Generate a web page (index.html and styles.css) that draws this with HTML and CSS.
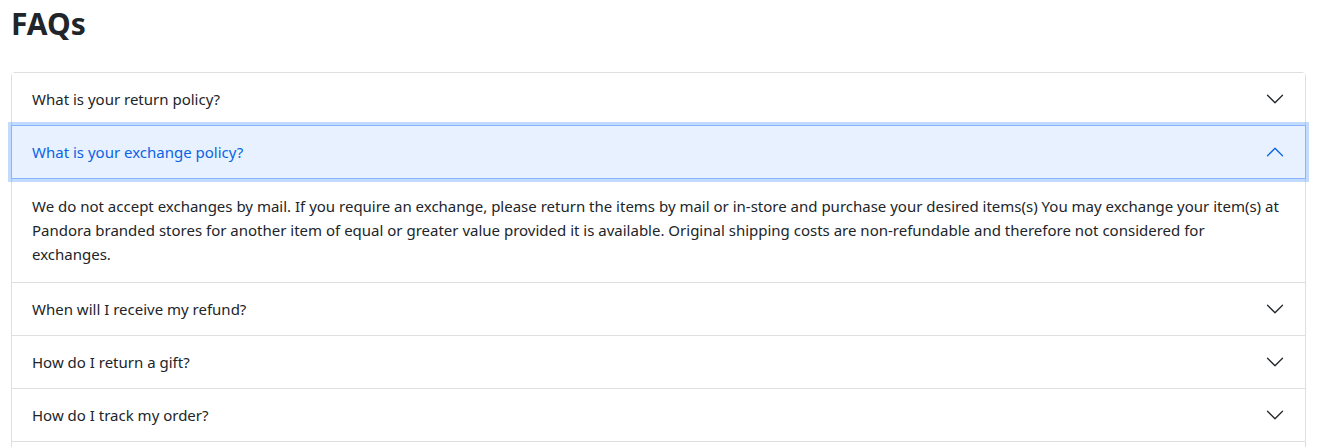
FILE: index.html
```html
<!DOCTYPE html>
<html lang="en">
<head>
<meta charset="utf-8">
<title>FAQs</title>
<link rel="stylesheet" href="styles.css">
</head>
<body>
<main class="page">
  <h2 class="title">FAQs</h2>
  <div class="accordion">
    <div class="item">
      <button class="btn" type="button"><span class="q">What is your return policy?</span>
        <svg class="chev" viewBox="0 0 16 16"><path d="M1.646 4.646a.5.5 0 0 1 .708 0L8 10.293l5.646-5.647a.5.5 0 0 1 .708.708l-6 6a.5.5 0 0 1-.708 0l-6-6a.5.5 0 0 1 0-.708z"/></svg>
      </button>
    </div>
    <div class="item open">
      <button class="btn active" type="button"><span class="q">What is your exchange policy?</span>
        <svg class="chev" viewBox="0 0 16 16"><path d="M1.646 4.646a.5.5 0 0 1 .708 0L8 10.293l5.646-5.647a.5.5 0 0 1 .708.708l-6 6a.5.5 0 0 1-.708 0l-6-6a.5.5 0 0 1 0-.708z"/></svg>
      </button>
      <div class="body">We do not accept exchanges by mail. If you require an exchange, please return the items by mail or in-store and purchase your desired items(s) You may exchange your item(s) at Pandora branded stores for another item of equal or greater value provided it is available. Original shipping costs are non-refundable and therefore not considered for exchanges.</div>
    </div>
    <div class="item">
      <button class="btn" type="button"><span class="q">When will I receive my refund?</span>
        <svg class="chev" viewBox="0 0 16 16"><path d="M1.646 4.646a.5.5 0 0 1 .708 0L8 10.293l5.646-5.647a.5.5 0 0 1 .708.708l-6 6a.5.5 0 0 1-.708 0l-6-6a.5.5 0 0 1 0-.708z"/></svg>
      </button>
    </div>
    <div class="item">
      <button class="btn" type="button"><span class="q">How do I return a gift?</span>
        <svg class="chev" viewBox="0 0 16 16"><path d="M1.646 4.646a.5.5 0 0 1 .708 0L8 10.293l5.646-5.647a.5.5 0 0 1 .708.708l-6 6a.5.5 0 0 1-.708 0l-6-6a.5.5 0 0 1 0-.708z"/></svg>
      </button>
    </div>
    <div class="item">
      <button class="btn" type="button"><span class="q">How do I track my order?</span>
        <svg class="chev" viewBox="0 0 16 16"><path d="M1.646 4.646a.5.5 0 0 1 .708 0L8 10.293l5.646-5.647a.5.5 0 0 1 .708.708l-6 6a.5.5 0 0 1-.708 0l-6-6a.5.5 0 0 1 0-.708z"/></svg>
      </button>
    </div>
    <div class="item more" aria-hidden="true"></div>
  </div>
</main>
</body>
</html>
```
FILE: styles.css
```css
* { box-sizing: border-box; }
html, body { margin: 0; background: #fff; }
body {
  font-family: "Noto Sans", "Open Sans", sans-serif;
  color: #212529;
  font-size: 15px;
  line-height: 1.5;
}
.page { padding: 0 11px; }
.title {
  margin: 0 0 29px;
  padding-top: 5px;
  font-size: 30px;
  line-height: 38px;
  font-weight: 700;
  color: #212529;
}
.accordion {
  border: 1px solid #dfdfdf;
  border-radius: 4px;
}
.item { border-top: 1px solid #dfdfdf; }
.item:first-child { border-top: 0; }
.item.more { height: 53px; }
.btn {
  display: flex;
  align-items: center;
  width: 100%;
  padding: 14px 20px;
  margin: 0;
  border: 0;
  background: #fff;
  font: inherit;
  color: #212529;
  text-align: left;
  line-height: 24px;
  cursor: pointer;
}
.q { flex: 1; }
.chev {
  width: 20px;
  height: 20px;
  fill: #212529;
}
.btn.active {
  position: relative;
  background: #e7f1ff;
  color: #0c63e4;
  box-shadow: 0 0 0 1px #86b7fe, 0 0 0 4px rgba(13, 110, 253, 0.25);
}
.btn.active .chev {
  fill: #0c63e4;
  transform: rotate(180deg);
}
.body {
  padding: 16px 20px 16px;
  line-height: 24px;
}
```
